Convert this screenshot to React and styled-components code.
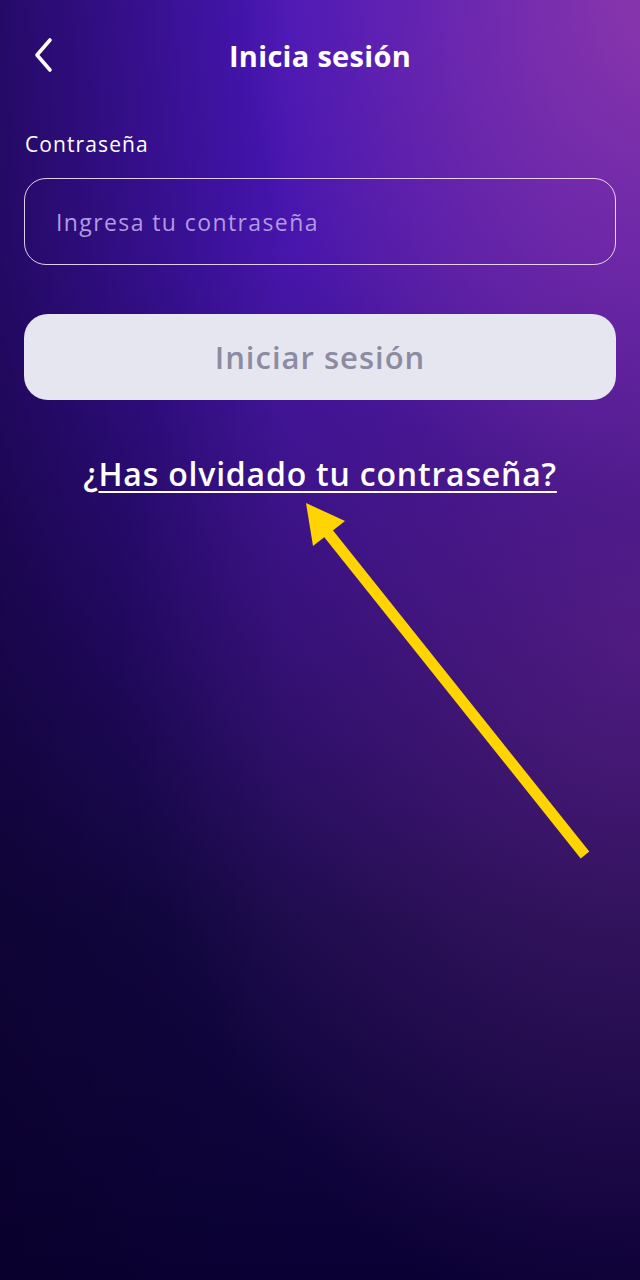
import React from 'react';
import styled, { createGlobalStyle } from 'styled-components';

const GlobalStyle = createGlobalStyle`
    html, body {
        margin: 0;
        padding: 0;
        background: #0a0033;
    }
`;

const Screen = styled.div`
    position: relative;
    width: 640px;
    height: 1280px;
    overflow: hidden;
    font-family: "Open Sans", "Noto Sans", sans-serif;
    color: #ffffff;
    background:
        radial-gradient(ellipse 420px 520px at 660px 0px, rgba(150, 60, 170, 0.85) 0%, rgba(150, 60, 170, 0) 100%),
        radial-gradient(ellipse 520px 700px at 640px 640px, rgba(110, 40, 140, 0.55) 0%, rgba(110, 40, 140, 0) 100%),
        linear-gradient(90deg, rgba(10, 0, 40, 0.55) 0%, rgba(10, 0, 40, 0) 45%),
        linear-gradient(180deg, #4816b6 0%, #4414ae 20%, #2c0c78 48%, #140845 72%, #0a0034 100%);
`;

const Header = styled.div`
    display: grid;
    grid-template-columns: 60px 1fr 60px;
    align-items: center;
    height: 56px;
    padding: 27px 29px 0 29px;
`;

const BackButton = styled.button`
    display: flex;
    align-items: center;
    background: none;
    border: none;
    padding: 0;
    color: #ffffff;
`;

const Title = styled.h1`
    margin: 0;
    text-align: center;
    font-size: 29px;
    font-weight: 700;
    letter-spacing: 0.3px;
`;

const Form = styled.div`
    display: flex;
    flex-direction: column;
    padding: 0 24px;
    margin-top: 47px;
`;

const Label = styled.label`
    font-size: 21px;
    font-weight: 400;
    letter-spacing: 1.1px;
    margin-left: 1px;
`;

const Field = styled.div`
    display: flex;
    align-items: center;
    height: 85px;
    margin-top: 20px;
    padding: 0 31px;
    border: 1.5px solid rgba(255, 240, 255, 0.85);
    border-radius: 22px;
    font-size: 23px;
    letter-spacing: 1.4px;
    color: #b29ae2;
`;

const SubmitButton = styled.div`
    display: flex;
    align-items: center;
    justify-content: center;
    height: 86px;
    margin-top: 49px;
    border-radius: 24px;
    background: #e6e6f0;
    color: #8c8ba2;
    font-size: 31px;
    font-weight: 600;
    letter-spacing: 1px;
`;

const ForgotLink = styled.div`
    margin-top: 52px;
    text-align: center;
    font-size: 32px;
    font-weight: 600;
    letter-spacing: 0.8px;

    span {
        text-decoration: underline;
        text-decoration-thickness: 2px;
        text-underline-offset: 5px;
    }
`;

const Arrow = styled.svg`
    position: absolute;
    left: 0;
    top: 0;
    pointer-events: none;
`;

const App = () => {
    return (
        <Screen>
            <GlobalStyle />
            <Header>
                <BackButton aria-label="Volver">
                    <svg width="30" height="36" viewBox="0 0 30 36">
                        <path d="M21 3 L8 18 L21 33" fill="none" stroke="#fff" strokeWidth="3.6" strokeLinecap="round" strokeLinejoin="round" />
                    </svg>
                </BackButton>
                <Title>Inicia sesión</Title>
                <div />
            </Header>
            <Form>
                <Label>Contraseña</Label>
                <Field>Ingresa tu contraseña</Field>
                <SubmitButton>Iniciar sesión</SubmitButton>
                <ForgotLink>¿<span>Has olvidado tu contraseña?</span></ForgotLink>
            </Form>
            <Arrow width="640" height="1280" viewBox="0 0 640 1280">
                <line x1="585" y1="855" x2="324" y2="528" stroke="#ffd400" strokeWidth="11" />
                <polygon points="306,503 345,521 313,546" fill="#ffd400" />
            </Arrow>
        </Screen>
    );
};

export default App;
